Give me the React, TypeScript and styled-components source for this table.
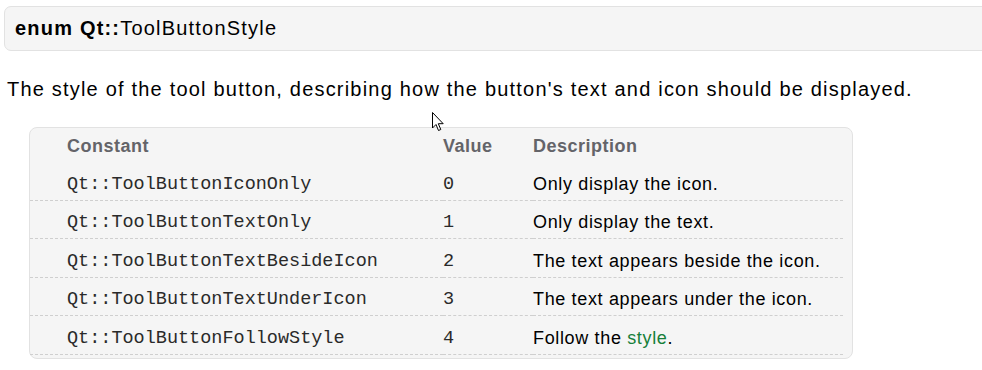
import styled, { createGlobalStyle } from "styled-components";

const GlobalStyle = createGlobalStyle`
  html, body {
    margin: 0;
    padding: 0;
    background: #ffffff;
    overflow: hidden;
  }
  body {
    font-family: "Liberation Sans", Arial, sans-serif;
    color: #000;
  }
`;

const Page = styled.div`
  position: relative;
  width: 982px;
  height: 370px;
  overflow: hidden;
`;

const TitleBar = styled.h3`
  margin: 6px -20px 0 4px;
  height: 43px;
  display: flex;
  align-items: center;
  padding-left: 10px;
  background: #f5f5f5;
  border: 1px solid #e2e2e2;
  border-radius: 7px;
  font-size: 20px;
  font-weight: normal;
  letter-spacing: 1.2px;
`;

const Keyword = styled.b`
  font-weight: bold;
  white-space: pre;
`;

const Intro = styled.p`
  margin: 26px 0 0 7px;
  font-size: 20px;
  line-height: 24px;
  letter-spacing: 1.2px;
`;

const Table = styled.table`
  margin: 26px 0 0 29px;
  width: 824px;
  border-collapse: separate;
  border-spacing: 0;
  background: #f5f5f5;
  border: 1px solid #e2e2e2;
  border-radius: 8px;
  padding: 0 9px 3px 0;
`;

const Head = styled.th<{ $pad?: number }>`
  text-align: left;
  font-size: 18px;
  font-weight: bold;
  letter-spacing: 0.5px;
  color: #646469;
  height: 31px;
  padding: 3px 0 0 ${(p) => p.$pad ?? 0}px;
  vertical-align: middle;
`;

const Cell = styled.td<{ $pad?: number; $mono?: boolean }>`
  height: 30.5px;
  padding: 7px 0 0 ${(p) => p.$pad ?? 0}px;
  border-bottom: 1px dashed #cfcfcf;
  vertical-align: middle;
  font-family: ${(p) =>
    p.$mono ? '"Liberation Mono", "Courier New", monospace' : '"Liberation Sans", Arial, sans-serif'};
  font-size: ${(p) => (p.$mono ? "18.5px" : "18px")};
  color: ${(p) => (p.$mono ? "#2a2a2a" : "#000")};
  letter-spacing: ${(p) => (p.$mono ? "0" : "0.65px")};
`;

const Link = styled.a`
  color: #17803a;
  text-decoration: none;
`;

const Cursor = styled.svg`
  position: absolute;
  left: 432px;
  top: 112px;
`;

const rows = [
  { name: "Qt::ToolButtonIconOnly", value: "0", desc: "Only display the icon." },
  { name: "Qt::ToolButtonTextOnly", value: "1", desc: "Only display the text." },
  { name: "Qt::ToolButtonTextBesideIcon", value: "2", desc: "The text appears beside the icon." },
  { name: "Qt::ToolButtonTextUnderIcon", value: "3", desc: "The text appears under the icon." },
  { name: "Qt::ToolButtonFollowStyle", value: "4", desc: null },
];

const App = () => {
  return (
    <Page>
      <GlobalStyle />
      <TitleBar>
        <Keyword>enum Qt::</Keyword>ToolButtonStyle
      </TitleBar>
      <Intro>
        The style of the tool button, describing how the button's text and icon should be displayed.
      </Intro>
      <Table>
        <thead>
          <tr>
            <Head $pad={37} style={{ width: 376 }}>Constant</Head>
            <Head style={{ width: 90 }}>Value</Head>
            <Head>Description</Head>
          </tr>
        </thead>
        <tbody>
          {rows.map((r) => (
            <tr key={r.name}>
              <Cell $pad={37} $mono>{r.name}</Cell>
              <Cell $mono>{r.value}</Cell>
              <Cell>
                {r.desc ?? (
                  <>
                    Follow the <Link href="#">style</Link>.
                  </>
                )}
              </Cell>
            </tr>
          ))}
        </tbody>
      </Table>
      <Cursor width="13" height="20" viewBox="0 0 13 20">
        <path
          d="M0.5 0.5 L0.5 16 L4 12.5 L6.5 18.5 L8.8 17.5 L6.3 11.7 L11.2 11.7 Z"
          fill="#fff"
          stroke="#000"
          strokeWidth="1"
          strokeLinejoin="miter"
        />
      </Cursor>
    </Page>
  );
};

export default App;
